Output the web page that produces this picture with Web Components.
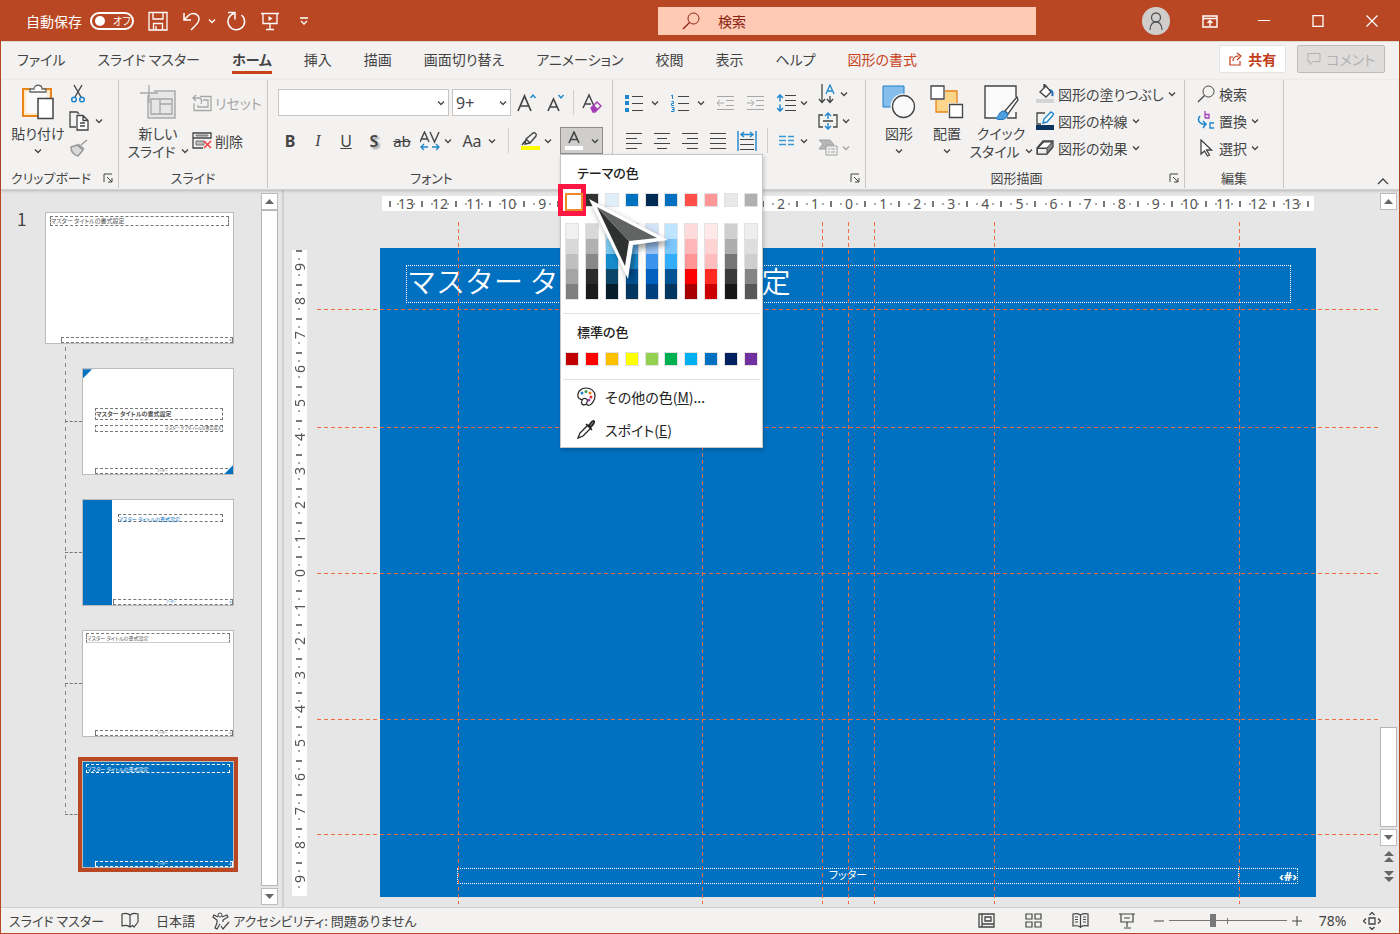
<!DOCTYPE html>
<html lang="ja">
<head>
<meta charset="utf-8">
<title>PowerPoint - スライド マスター</title>
<style>
html{height:100%}
body{margin:0;min-height:100%;display:flex;flex-direction:column;font:14px/18px "Noto Sans CJK JP","Noto Sans",sans-serif;font-feature-settings:"palt";color:#444;background:#e6e6e6}
</style>
</head>
<body>
<pp-window></pp-window>
<script>
const BASE = `*{box-sizing:border-box}
button,select,input{font:inherit;font-feature-settings:inherit;color:inherit;background:none;border:0;margin:0;padding:0}
button{display:inline-flex;align-items:center;justify-content:center;white-space:nowrap}`;

function define(tag, css, html) {
  const tpl = document.createElement('template');
  customElements.define(tag, class extends HTMLElement {
    constructor() {
      super();
      this.attachShadow({ mode: 'open' });
    }
    connectedCallback() {
      if (this.shadowRoot.childNodes.length) return;
      tpl.innerHTML = `<style>${BASE}${css}</style>${typeof html === 'function' ? html(this) : html}`;
      this.shadowRoot.append(tpl.content.cloneNode(true));
    }
  });
}

/* name: [width, height, markup] */
const lines = (rows, c = '#444') => rows.map(([x, y, w]) => `<path stroke="${c}" d="M${x} ${y}h${w}"/>`).join('');
const ICONS = {
  chev: [8, 6, '<path d="M1 1.5l3 3 3-3" stroke-width="1.3"/>'],
  up: [12, 8, '<path d="M1 7l5-5 5 5" stroke-width="1.3"/>'],
  save: [20, 20, '<path d="M1 1.500h18v17.500H1zM5 1.500v6.500h10V1.500M5.500 19v-6.500h9V19M8 15v4" stroke-width="1.300"/>'],
  undo: [20, 20, '<path d="M2 2v7h7M2 9l5-5c4-3 10-1 10 4 0 3-2 5-8 11" stroke-width="1.5"/>'],
  redo: [20, 20, '<path d="M2 1.500h7v7M8 2.500A8.300 8.300 0 1 0 15.500 4" stroke-width="1.500"/>'],
  show: [18, 19, '<path d="M0 1.500h18M2 1.500v10h14v-10M9 11.500V17M5 17.500h8" stroke-width="1.300"/><path d="M7.500 4v5l4-2.500z" fill="currentColor" stroke="none"/>'],
  custom: [10, 8, '<path d="M1 1h8M2 4l3 3 3-3" stroke-width="1.300"/>'],
  lens: [18, 18, '<circle cx="11.500" cy="6.500" r="5.500"/><path d="M7.500 10.500L1 17" stroke-width="1.300"/>'],
  user: [28, 28, '<circle cx="14" cy="14" r="14" fill="#d0cecd" stroke="none"/><circle cx="14" cy="10.500" r="4.500" stroke="#555" stroke-width="1.300"/><path d="M8 23c0-11 12-11 12 0" stroke="#555" stroke-width="1.300"/>'],
  ropt: [16, 13, '<path d="M1 1h14v11H1zM1 3.500h14M8 11V6M5.500 8L8 5.500 10.500 8" stroke-width="1.400"/>'],
  min: [12, 12, '<path d="M0 5.500h12"/>'],
  max: [12, 12, '<path d="M1 .5h10v11H1z" stroke-width="1.300"/>'],
  close: [12, 12, '<path d="M.5.5l11 11M11.500.5l-11 11" stroke-width="1.200"/>'],
  share: [14, 14, '<path d="M4 5H1v8h10V9M4 9c0-4 3-5 6-5M8 1l4 3-4 4" stroke-width="1.200"/>'],
  comment: [14, 14, '<path d="M1 1.500h12v8H6l-3 3v-3H1z"/>'],
  paste: [34, 36, '<path d="M10 5H2v27h28V5h-8" stroke="#e8841a" stroke-width="2" fill="#fbe9c8"/><path d="M5 8h21v21H5z" fill="#fafafa" stroke="none"/><path d="M9 8V5h4c0-5 8-5 8 0h4v3z" fill="#fff" stroke="#666" stroke-width="1.300"/><path d="M17 14.500h15v20H17z" fill="#fff" stroke="#444" stroke-width="1.500"/>'],
  cut: [18, 20, '<path d="M5 1l7 12M13 1L6 13" stroke-width="1.400"/><circle cx="5" cy="15.500" r="2.300" stroke="#1f86cc" stroke-width="1.500"/><circle cx="13" cy="15.500" r="2.300" stroke="#1f86cc" stroke-width="1.500"/>'],
  copy: [20, 20, '<path d="M7 16H1V1h7l2 2" stroke-width="1.300"/><path d="M8 4.500h6l5 5V19H8zM14 4.500v5h5M11 12h5M11 15h5" fill="#fff" stroke-width="1.300"/>'],
  brush: [20, 18, '<path d="M18 1l-6 5M9 5l6 5M8 6l-6 2c0 5 3 8 7 9l5-6z" stroke="#999" stroke-width="1.500" fill="#d8d8d8"/>'],
  newslide: [36, 34, '<path d="M8 10v23h27V6H14" fill="#e6e6e6" stroke="#aaa" stroke-width="1.500"/><path d="M11 14h21v15H11zM20 14v15M20 19h12M9 0v18M0 8h18" stroke="#a6a6a6" stroke-width="1.300"/>'],
  reset: [20, 18, '<path d="M8 2.500h11v14H2v-7M11 6h5v7H6v-2" stroke="#a6a6a6" stroke-width="1.300"/><path d="M4 1L1 4l3 3M1 4h6c3 0 3 4 2 6" stroke="#a6a6a6" stroke-width="1.300"/>'],
  del: [20, 18, '<path d="M1 1h18v5H1zM1 6v10h10" stroke-width="1.300"/><path d="M4 3h12v1H4zM4 9h8v4H4z" fill="#bbb" stroke="#777"/><path d="M12 9l7 7M19 9l-7 7" stroke="#f04040" stroke-width="1.500"/>'],
  grow: [20, 20, '<path d="M1 18L7.500 3 14 18M3.500 13h8" stroke-width="1.700"/><path d="M13.500 5L16 2l2.500 3" stroke="#1f86cc" stroke-width="1.400"/>'],
  shrink: [20, 20, '<path d="M3 18L8.500 6 14 18M5 14h7" stroke-width="1.600"/><path d="M13.500 2L16 5l2.500-3" stroke="#1f86cc" stroke-width="1.400"/>'],
  clear: [20, 20, '<path d="M1 15L7 2l5 11M3 11h6" stroke-width="1.500"/><path d="M9 15l6-6 4 4-6 6h-2z" stroke="#a63fb5" stroke-width="1.500" fill="#f3f2f1"/><path d="M9 15l3-3 4 4-3 3h-2z" fill="#a63fb5" stroke="none"/>'],
  av: [20, 20, '<path d="M0 11L4.500 1 9 11M2 8h5M10 1l4.500 10L19 1" stroke-width="1.400"/><path d="M1 16h7M4 13l-3 3 3 3M12 16h7M16 13l3 3-3 3" stroke="#1f86cc" stroke-width="1.300"/>'],
  mark: [20, 20, '<path d="M6 8l7-6c2-1 4 1 3 3l-6 7-5 1zM6 8l4 4M2 14l3-4" stroke-width="1.400"/><path d="M1 15h19v4H1z" fill="#ff0" stroke="none"/>'],
  fontcolor: [18, 20, '<path d="M4 12L9 1l5 11M6 8.500h6" stroke-width="1.600"/><path d="M0 15h18v4H0z" fill="#fff" stroke="none"/>'],
  bullets: [18, 18, lines([[7, 2.5, 11], [7, 9.5, 11], [7, 16.5, 11]]) + '<path d="M0 1h4v4H0zM0 7h4v4H0zM0 14h4v4H0z" fill="#1f86cc" stroke="none"/>'],
  numbers: [18, 18, lines([[7, 2.5, 11], [7, 9.5, 11], [7, 16.5, 11]]) + '<path d="M0 2l1.500-1v4M.5 7.500h2v2h-2v2h2.500M.5 13.500h2.500v4H0M1 15.500h2" stroke="#1f86cc"/>'],
  outdent: [18, 16, lines([[0, 1.5, 17], [9, 5.5, 8], [9, 10.5, 8], [0, 14.5, 17]], '#a8a8a8') + '<path d="M0 8h7M3 5L0 8l3 3" stroke="#a8a8a8"/>'],
  indent: [18, 16, lines([[0, 1.5, 17], [9, 5.5, 8], [9, 10.5, 8], [0, 14.5, 17]], '#a8a8a8') + '<path d="M0 8h7M4 5l3 3-3 3" stroke="#a8a8a8"/>'],
  spacing: [19, 18, lines([[8, 1.5, 11], [8, 6.5, 11], [8, 11.5, 11], [8, 16.5, 11]]) + '<path d="M3 1v6.500M0 4l3-3 3 3M3 10.500V17M0 14l3 3 3-3" stroke="#1f86cc" stroke-width="1.500"/>'],
  left: [18, 18, lines([[1, 1.5, 16], [1, 6.5, 11], [1, 11.5, 16], [1, 16.5, 11]])],
  center: [18, 18, lines([[1, 1.5, 16], [4, 6.5, 10], [1, 11.5, 16], [4, 16.5, 10]])],
  right: [18, 18, lines([[1, 1.5, 16], [6, 6.5, 11], [1, 11.5, 16], [6, 16.5, 11]])],
  just: [18, 18, lines([[1, 1.5, 16], [1, 6.5, 16], [1, 11.5, 16], [1, 16.5, 16]])],
  dist: [20, 20, lines([[3, 8.5, 14], [3, 13.5, 14], [3, 18.5, 14]]) + '<path d="M1 0v20M19 0v20M4 3.500h12M7 1L4 3.500 7 6M13 1l3 2.500L13 6" stroke="#1f86cc" stroke-width="1.400"/>'],
  cols: [16, 12, '<path d="M0 1.500h7M9 1.500h6M0 5.500h7M9 5.500h6M0 9.500h7M9 9.500h6" stroke="#3b97d8" stroke-width="1.400"/>'],
  textdir: [18, 20, '<path d="M4 0v18M1 15l3 3.500L7 15M12 12v6.500M9 15l3 3.500 3-3.500" stroke-width="1.300"/><path d="M8 10l4-9 4 9M10 7h4" stroke="#1f86cc" stroke-width="1.300"/>'],
  valign: [20, 18, '<path d="M5 3H1v12h4M15 3h4v12h-4M5 9h10" stroke-width="1.300"/><path d="M10 7V1M7 4l3-3 3 3M10 11v6M7 14l3 3 3-3" stroke="#1f86cc" stroke-width="1.400"/>'],
  smart: [20, 18, '<path d="M1 1h11l4 5H8v4H1l4-5z" fill="#b8b8b8" stroke="#a0a0a0"/><path d="M8 7h11v9H8zM10 10h2M13 10h4M10 13h2M13 13h4" fill="#f3f2f1" stroke="#a0a0a0"/>'],
  launch: [10, 10, '<path d="M1 9V1h8M4 4l5 5M9 5v4H5"/>'],
  shapes: [34, 34, '<path d="M1 1h21v21H1z" fill="#83beec" stroke="#1f7fc8"/><circle cx="21.500" cy="21.500" r="12" fill="#f3f2f1" stroke="#f3f2f1" stroke-width="2"/><circle cx="21.500" cy="21.500" r="11" fill="#fafafa" stroke-width="1.300"/>'],
  arrange: [34, 34, '<path d="M6 6h21v21H6z" fill="#fbd58a" stroke="#e8841a" stroke-width="1.300"/><path d="M0 0h15v15H0zM18 18h15v15H18z" fill="#f3f2f1" stroke="none"/><path d="M1 1h13v13H1zM19.500 19.500h13v13h-13z" fill="#fff" stroke-width="1.300"/>'],
  style: [36, 36, '<path d="M12 34H2V2h31v11M33 28v6h-9" fill="#fbfbfb" stroke-width="1.400"/><path d="M34 13L22 27l3 3 10-14z" fill="#fff" stroke-width="1.300"/><path d="M21 27c-6 0-4 6-9 7 5 3 12 2 13-4z" fill="#4f9fe0" stroke="#1f6fb8"/>'],
  fill: [18, 20, '<path d="M4 8l6-6 5 6-5 5zM8 4V0l3 3" stroke-width="1.400" fill="#fff"/><path d="M14 6c3 1 3 4 2 6" stroke="#1f6fb8" stroke-width="2"/><path d="M0 15h18v4H0z" fill="#d4d4d4" stroke="none"/>'],
  outline: [18, 20, '<path d="M9 2H1v11h4" stroke-width="1.300"/><path d="M7 12l1-4 7-7 3 2-7 8z" fill="#fff" stroke="#1f86cc" stroke-width="1.400"/><path d="M0 14h18v5H0z" fill="#0a3560" stroke="none"/>'],
  effect: [18, 18, '<path d="M1 9l6-7h10v6l-6 7H1z" fill="#888" stroke="#444" stroke-width="1.300"/><path d="M2 9l6-6h8l-5 6z" fill="#fff" stroke="#444"/><path d="M1.500 9.500H11V15H1.500z" fill="#eee"/>'],
  replace: [18, 20, '<path d="M8 0v7M8 3.500h4v3.500H8" stroke="#a63fb5" stroke-width="1.300"/><path d="M17 12h-4v5h4" stroke="#1f86cc" stroke-width="1.300"/><path d="M3 5c-4 5 1 9 6 8M6 10l3 3-3 4" stroke="#1f86cc" stroke-width="1.500"/>'],
  select: [14, 18, '<path d="M2 1v14l3.500-3 3 5 2-1-3-5h5z" fill="#fff" stroke-width="1.300"/>'],
  palette: [20, 20, '<path d="M10 17c-2 2-6 0-4-3 1-2-3-1-4-4C1 4 6 1 10 1c5 0 9 3 9 8 0 4-3 8-5 9-3 1-4-1-3-3 2-3-3-5-5-2" stroke-width="1.200"/><g stroke="none"><circle cx="6" cy="6" r="1.500" fill="#1f86cc"/><circle cx="10" cy="4.500" r="1.500" fill="#3a9a4a"/><circle cx="14" cy="6" r="1.500" fill="#e8841a"/><circle cx="15" cy="10" r="1.500" fill="#e03030"/><circle cx="13" cy="13" r="1.500" fill="#a63fb5"/></g>'],
  dropper: [20, 20, '<path d="M2 18l2-5 8-8 3 3-8 8z" stroke-width="1.300"/><path d="M10 4l6 6M13 6c1-3 4-6 5-5s-1 5-4 6z" fill="#777" stroke-width="1.500"/>'],
  book: [18, 18, '<path d="M9 3v12M9 3C7 1 4 1 1 2v12c3-1 6-1 8 1l2-1M9 3c2-2 5-2 8-1v8M11 13l2 2 4-5" stroke-width="1.200"/>'],
  access: [18, 18, '<circle cx="8" cy="3" r="2"/><path d="M6 5L2 3 1 5l4 3v3l-2 5 2 1 3-5M10 5l5-2 1 2-5 3v2M9 14l2 3 6-7" stroke-width="1.200"/>'],
  normal: [17, 15, '<path d="M1 1h15v13H1zM4 1v13M4 11h12M7 4h6v4H7z" stroke-width="1.300"/>'],
  sorter: [17, 15, '<path d="M1 1h6v5H1zM10 1h6v5h-6zM1 9h6v5H1zM10 9h6v5h-6z" stroke-width="1.200"/>'],
  reading: [17, 15, '<path d="M8.500 2v13M8.500 2C6 .5 3 .5 1 1v12c3-.5 5-.5 7.500 1C11 12.500 14 12.500 16 13V1c-2-.5-5-.5-7.500 1M3 4h3M3 6.500h3M3 9h3M11 4h3M11 6.500h3M11 9h3" stroke-width="1.200"/>'],
  present: [16, 16, '<path d="M0 1h16M2 1v8h12V1M5 5h6M8 9v5M5 15h7" stroke-width="1.200"/>'],
  minus: [10, 10, '<path d="M0 5h10"/>'],
  plus: [10, 10, '<path d="M0 5h10M5 0v10"/>'],
  fit: [18, 18, '<path d="M6 6h6v6H6zM6.500 3L9 .5 11.500 3M6.500 15L9 17.500l2.500-2.500M3 6.500L.5 9 3 11.500M15 6.500L17.500 9 15 11.500" stroke-width="1.300"/>'],
  triup: [9, 5, '<path d="M0 5L4.500 0 9 5z" fill="#666" stroke="none"/>'],
  tridown: [9, 5, '<path d="M0 0l4.500 5L9 0z" fill="#666" stroke="none"/>'],
  dblup: [10, 11, '<path d="M0 5l5-5 5 5zM0 11l5-5 5 5z" fill="#666" stroke="none"/>'],
  dbldown: [10, 11, '<path d="M0 0l5 5 5-5zM0 6l5 5 5-5z" fill="#666" stroke="none"/>']
};
define('pp-icon', ':host{display:inline-flex;flex:none}svg{display:block}', el => {
  const [w, h, m] = ICONS[el.getAttribute('name')];
  return `<svg width="${w}" height="${h}" viewBox="0 0 ${w} ${h}" fill="none" stroke="currentColor" aria-hidden="true">${m}</svg>`;
});
const icon = n => `<pp-icon name="${n}"></pp-icon>`;

define('pp-titlebar', `
:host{display:grid;grid-template-columns:47% 27% 1fr;height:40px;background:#b94723;color:#fff;align-items:center}
.left{display:flex;align-items:center;padding-left:25px}
.auto{display:flex;align-items:center;gap:8px}
.toggle{display:flex;align-items:center;gap:8px;width:44px;height:18px;border:2px solid #fff;border-radius:9px;padding:0 3px;font-size:10px;line-height:14px;white-space:nowrap}
.toggle input{appearance:none;width:10px;height:10px;border-radius:50%;background:#fff;flex:none}
.left button{height:24px}
.a{width:20px;margin-left:14px}.b{width:36px;margin-left:14px;gap:6px;justify-content:flex-start}.c{width:20px;margin-left:8px}
.search{display:flex;align-items:center;gap:18px;height:28px;background:#fecab4;color:#8a1f11;padding-left:24px;min-width:0}
.search input{flex:1;min-width:0;outline:0}
.search input::placeholder{color:#8a1f11;opacity:1}
.right{display:flex;justify-content:flex-end}
.right button{width:54px;height:40px}`, `
<div class="left"><label class="auto">自動保存<span class="toggle"><input type="checkbox" aria-label="自動保存">オフ</span></label>
<button class="a" aria-label="上書き保存">${icon('save')}</button>
<button class="b" aria-label="元に戻す">${icon('undo')}${icon('chev')}</button>
<button class="c" aria-label="やり直し">${icon('redo')}</button>
<button class="a" aria-label="最初から開始">${icon('show')}</button>
<button class="a" aria-label="クイック アクセス">${icon('custom')}</button></div>
<label class="search">${icon('lens')}<input type="search" placeholder="検索" aria-label="検索"></label>
<div class="right"><button aria-label="アカウント">${icon('user')}</button><button aria-label="リボンの表示オプション">${icon('ropt')}</button><button aria-label="最小化">${icon('min')}</button><button aria-label="最大化">${icon('max')}</button><button aria-label="閉じる">${icon('close')}</button></div>`);

define('pp-tabs', `
:host{display:flex;height:39px;align-items:center;justify-content:space-between;background:#f3f2f1;border-top:1px solid #e4d8d3;padding:0 14px 4px 16px}
nav{display:flex;gap:32px;white-space:nowrap}
a{color:inherit;text-decoration:none;line-height:24px}
a.on{font-weight:700;box-shadow:0 3px #c8431a}
a.ctx{color:#c8431a}
.acts{display:flex;gap:11px}
.acts button{height:28px;gap:5px;padding:0 9px;border-radius:2px}
.share{background:#fff;color:#c03d18;font-weight:700;border:1px solid #e6e4e2}
.com{background:#dedddc;color:#b4b2b0;border:1px solid #bdbbb9}`, `
<nav><a href="#">ファイル</a><a href="#">スライド マスター</a><a href="#" class="on">ホーム</a><a href="#">挿入</a><a href="#">描画</a><a href="#">画面切り替え</a><a href="#">アニメーション</a><a href="#">校閲</a><a href="#">表示</a><a href="#">ヘルプ</a><a href="#" class="ctx">図形の書式</a></nav>
<div class="acts"><button class="share">${icon('share')}共有</button><button class="com" disabled>${icon('comment')}コメント</button></div>`);

/* One ribbon section: tools above, caption and dialog launcher below */
define('pp-group', `
:host{display:grid;grid-template-rows:88px 20px;height:108px;flex:none;border-right:1px solid #c8c6c4;width:var(--w)}
.body{display:flex;padding-left:var(--p,10px)}
.foot{display:flex;align-items:center;text-align:center;font-size:13px;white-space:nowrap}
.foot button{height:14px;width:14px;margin-right:3px}
.foot span{flex:1}`, el => `
<div class="body"><slot></slot></div><div class="foot"><span>${el.getAttribute('label')}</span>${el.hasAttribute('launch') ? `<button aria-label="${el.getAttribute('label')} の設定">${icon('launch')}</button>` : ''}</div>`);

define('pp-big', `
:host{display:block;flex:none;width:48px}
:host([size=m]){width:54px}
:host([size=l]){width:60px}
button{width:100%;display:flex;flex-direction:column}
.i{height:44px;display:flex;align-items:center}
.l{height:18px;display:flex;align-items:center;gap:5px}`, el => {
  const l2 = el.getAttribute('line2') || '';
  return `<button><span class="i">${icon(el.getAttribute('icon'))}</span><span class="l">${el.getAttribute('label')}</span><span class="l">${l2}${icon('chev')}</span></button>`;
});

define('pp-tool', `
:host{display:inline-flex;flex:none;position:relative}
:host([off]){color:#a6a6a6}
button{height:27px;gap:var(--g,4px)}
.i{display:flex;justify-content:center;min-width:18px}
:host([open]) button{background:#cfcecc;border:1px solid #8f8d8b;width:43px}`, el => {
  const n = el.getAttribute('icon'), t = el.getAttribute('label');
  return `<button${t ? '' : ` aria-label="${el.getAttribute('tip') || n}"`}${el.hasAttribute('off') ? ' disabled' : ''}>${n ? `<span class="i">${icon(n)}</span>` : ''}${t ? `<span>${t}</span>` : ''}<slot></slot>${el.hasAttribute('menu') ? icon('chev') : ''}</button><slot name="popup"></slot>`;
});

define('pp-combo', `
:host{display:grid;width:171px;height:27px;background:#fff;border:1px solid #c8c6c4;align-items:center}
:host([small]){width:59px;margin:0 6px 0 3px}
select{grid-area:1/1;appearance:none;width:100%;height:100%;padding-left:3px;font:16px/24px "Noto Sans",sans-serif;outline:0}
pp-icon{grid-area:1/1;justify-self:end;margin-right:3px;pointer-events:none}`, el => `
<select aria-label="${el.getAttribute('label')}"><option>${el.getAttribute('value')}</option></select>${icon('chev')}`);

const THEME = ['#fff', '#333', '#dfeffa', '#0070c0', '#002b54', '#0070c0', '#ff4f4b', '#ff9696', '#e8e8e8', '#b0b0b0'];
const TINTS = [
  ['#f0f0f0', '#d8d8d8', '#bfbfbf', '#a5a5a5', '#7f7f7f'], ['#d8d8d8', '#b0b0b0', '#888', '#2a2a2a', '#1a1a1a'],
  ['#c4e6f8', '#7cc8ee', '#168bcb', '#0a4668', '#051d2b'], ['#b5e0ff', '#6cc0fa', '#1a8fd8', '#005293', '#003660'],
  ['#d3e3f8', '#9cc4f6', '#3a94ed', '#0060c0', '#004080'], ['#bde5ff', '#7cc8ff', '#33aeff', '#005493', '#00365f'],
  ['#ffdada', '#ffb6b6', '#ff9494', '#f00', '#a80000'], ['#ffe8e8', '#ffd3d3', '#ffbcbc', '#ff2a22', '#c00'],
  ['#d0d0d0', '#adadad', '#757575', '#3a3a3a', '#171717'], ['#eee', '#dedede', '#cecece', '#858585', '#585858']];
const STANDARD = ['#c00000', '#f00', '#ffc000', '#ff0', '#92d050', '#00b050', '#00b0f0', '#0070c0', '#002060', '#7030a0'];
const sw = c => `<button class="sw" style="background:${c}" aria-label="${c}"></button>`;
define('pp-colormenu', `
:host{position:absolute;top:27px;left:0;z-index:5;width:203px;background:#fff;border:1px solid #c6c6c6;box-shadow:1px 2px 4px #0003;color:#222;padding-bottom:1px}
h3{margin:0;padding-left:16px;font-size:13px;font-weight:500;line-height:36px}
.row{display:flex;justify-content:space-between;padding:2px 4px 0}
.sw{width:14px;height:14px;border:1px solid #e2e2e2}
.tints{padding-top:12px}
.col{width:14px;border:1px solid #e2e2e2;display:grid}
.col button{height:15px}
hr{margin:13px 2px 0;border:0;border-top:1px solid #e1e1e1}
.item{display:flex;justify-content:flex-start;width:100%;height:33px;padding-left:15px;gap:9px}
.first{position:relative}
.pick{position:absolute;left:-7px;top:-9px;width:28px;height:32px;border:5px solid #ff1744;background:#fff;pointer-events:none}
.pick::after{content:"";position:absolute;left:2px;top:4px;width:14px;height:14px;border:2px solid #f08a2c;background:#fff}
.arrow{position:absolute;left:24px;top:38px;pointer-events:none;filter:drop-shadow(3px 4px 3px #0006)}`, `
<h3>テーマの色</h3>
<div class="row"><div class="first">${sw(THEME[0])}<span class="pick"></span></div>${THEME.slice(1).map(sw).join('')}</div>
<div class="row tints">${TINTS.map(c => `<div class="col">${c.map(x => `<button style="background:${x}" aria-label="${x}"></button>`).join('')}</div>`).join('')}</div>
<hr><h3>標準の色</h3>
<div class="row">${STANDARD.map(sw).join('')}</div><hr>
<button class="item">${icon('palette')}<span>その他の色(<u>M</u>)...</span></button>
<button class="item">${icon('dropper')}<span>スポイト(<u>E</u>)</span></button>
<svg class="arrow" width="86" height="90" viewBox="0 0 86 90"><path d="M4 6l79 41-35 5-5 34z" fill="#fff"/><path d="M12 14l32 34-4 25z" fill="#2e3130"/><path d="M12 14l60 31-28 3z" fill="#626463"/></svg>`);

define('pp-ribbon', `
:host{display:flex;position:relative;z-index:3;height:110px;background:#f3f2f1;border-bottom:1px solid #d2d0ce;box-shadow:0 1px 3px #0003}
.col{display:flex;flex-direction:column;align-items:flex-start}
.col.two{gap:11px;padding-top:9px}
.col.mid{padding-left:10px}
.row{display:flex;align-items:center;height:27px}
.size{gap:8px}
.fmt{gap:8px;padding-left:2px}
.fmt b,.fmt i,.fmt u,.fmt s{display:inline-block;width:20px;text-align:center;font:16px/24px "Noto Sans",sans-serif}
.fmt b{font-weight:700}.fmt i{font-style:italic;font-family:"Liberation Serif",serif}.fmt s{font-size:15px}
.fmt .sh{font-weight:600;text-shadow:2px 2px 2px #999}
.fmt .aa{font:16px/24px "Noto Sans",sans-serif;width:24px}
.vr{width:1px;height:25px;background:#d0cecc}
.fmt .vr{margin:0 3px 0 4px}
.lists{gap:12px}.aligns{gap:10px}
.end{flex:1;display:flex;align-items:flex-end;justify-content:flex-end;padding:0 10px 4px 0}
.cl{padding-left:4px}.ind{padding-left:5px}`, `
<pp-group label="クリップボード" launch style="--w:118px;--p:10px"><pp-big size="m" icon="paste" label="貼り付け"></pp-big>
<div class="col cl"><pp-tool icon="cut"></pp-tool><pp-tool icon="copy" menu style="--g:6px"></pp-tool><pp-tool icon="brush"></pp-tool></div></pp-group>
<pp-group label="スライド" style="--w:149px;--p:9px"><pp-big size="l" icon="newslide" label="新しい" line2="スライド"></pp-big>
<div class="col two cl"><pp-tool icon="reset" label="リセット" off style="--g:3px"></pp-tool><pp-tool icon="del" label="削除" style="--g:3px"></pp-tool></div></pp-group>
<pp-group label="フォント" launch style="--w:345px;--p:10px"><div class="col two">
<div class="row"><pp-combo label="フォント" value=""></pp-combo><pp-combo small label="フォント サイズ" value="9+"></pp-combo>
<div class="row size"><pp-tool icon="grow"></pp-tool><pp-tool icon="shrink"></pp-tool><span class="vr"></span><pp-tool icon="clear"></pp-tool></div></div>
<div class="row fmt"><pp-tool tip="太字"><b>B</b></pp-tool><pp-tool tip="斜体"><i>I</i></pp-tool><pp-tool tip="下線"><u>U</u></pp-tool><pp-tool tip="影"><b class="sh">S</b></pp-tool><pp-tool tip="取り消し線"><s>ab</s></pp-tool><pp-tool icon="av" menu></pp-tool><pp-tool tip="文字種の変換" menu><span class="aa">Aa</span></pp-tool><span class="vr"></span><pp-tool icon="mark" menu></pp-tool>
<pp-tool icon="fontcolor" menu open style="--g:8px"><pp-colormenu slot="popup"></pp-colormenu></pp-tool></div></div></pp-group>
<pp-group label="" launch style="--w:253px;--p:12px"><div class="col two">
<div class="row lists"><pp-tool icon="bullets" menu style="--g:8px"></pp-tool><pp-tool icon="numbers" menu style="--g:8px"></pp-tool><pp-tool icon="outdent" off></pp-tool><pp-tool icon="indent" off></pp-tool><pp-tool icon="spacing" menu></pp-tool></div>
<div class="row aligns"><pp-tool icon="left"></pp-tool><pp-tool icon="center"></pp-tool><pp-tool icon="right"></pp-tool><pp-tool icon="just"></pp-tool><pp-tool icon="dist"></pp-tool><span class="vr"></span><pp-tool icon="cols" menu></pp-tool></div></div>
<div class="col mid"><pp-tool icon="textdir" menu></pp-tool><pp-tool icon="valign" menu></pp-tool><pp-tool icon="smart" menu off></pp-tool></div></pp-group>
<pp-group label="図形描画" launch style="--w:319px;--p:9px"><pp-big icon="shapes" label="図形"></pp-big><pp-big icon="arrange" label="配置"></pp-big><pp-big size="l" icon="style" label="クイック" line2="スタイル"></pp-big>
<div class="col ind"><pp-tool icon="fill" label="図形の塗りつぶし" menu></pp-tool><pp-tool icon="outline" label="図形の枠線" menu></pp-tool><pp-tool icon="effect" label="図形の効果" menu></pp-tool></div></pp-group>
<pp-group label="編集" style="--w:99px;--p:12px"><div class="col"><pp-tool icon="lens" label="検索"></pp-tool><pp-tool icon="replace" label="置換" menu></pp-tool><pp-tool icon="select" label="選択" menu></pp-tool></div></pp-group>
<div class="end"><button aria-label="リボンを折りたたむ">${icon('up')}</button></div>`);

define('pp-scroll', `
:host{display:flex;flex-direction:column;width:17px}
button{width:100%;height:17px;background:#fff;border:1px solid #bdbdbd;flex:none}
.bar{background:#fff;border:1px solid #b5b5b5;flex:1;margin-bottom:2px}
:host([page]) .bar{flex:0 0 100px;margin-top:auto}
.pg{background:none;border:0;height:20px}`, el => `
<button aria-label="上へ">${icon('triup')}</button><div class="bar"></div><button aria-label="下へ">${icon('tridown')}</button>
${el.hasAttribute('page') ? `<button class="pg" aria-label="前のスライド">${icon('dblup')}</button><button class="pg" aria-label="次のスライド">${icon('dbldown')}</button>` : ''}`);

/* Miniature slide; kind = master | title | side | lined | blue */
define('pp-thumb', `
:host{display:block;position:relative;background:#fff;border:1px solid #bbb;aspect-ratio:152/107;color:#555;font-size:5px;line-height:7px;overflow:hidden}
:host([kind=master]){aspect-ratio:190/133;font-size:6px}
:host([kind=blue]){background:#0070c0;color:#fff;outline:4px solid #b94723;overflow:visible}
.t,.s,.f{position:absolute;border:1px dashed #777;white-space:nowrap}
.t{left:2%;right:2%;top:2%;height:8%}
.f{left:8%;right:0;bottom:0;height:6px;display:flex;justify-content:space-between;font-size:3px;line-height:4px}
.f::before{content:""}
.s{display:none}
:host([kind=title]) .t{left:8%;right:7%;top:37%;height:11%;font-weight:700;font-size:6px;line-height:9px}
:host([kind=title]) .s{display:block;left:8%;right:7%;top:53%;height:7%;text-align:right;font-size:4px;line-height:5px}
:host([kind=title])::before,:host([kind=title])::after{content:"";position:absolute;width:9px;height:9px;background:#0070c0}
:host([kind=title])::before{left:0;top:0;clip-path:polygon(0 0,100% 0,0 100%)}
:host([kind=title])::after{right:0;bottom:0;clip-path:polygon(100% 0,100% 100%,0 100%)}
:host([kind=side]){background:linear-gradient(90deg,#0070c0 29px,#fff 29px);color:#0070c0}
:host([kind=side]) .t{left:23%;right:7%;top:13%}
:host([kind=side]) .f{left:20%}
:host([kind=lined]) .t{border-bottom:1px solid #ccc;height:9%}
:host([kind=blue]) .t,:host([kind=blue]) .f{border-color:#fff}`, el => `
<span class="t">マスター タイトルの書式設定</span>${el.getAttribute('kind') === 'title' ? '<span class="s">マスター サブタイトルの書式設定</span>' : ''}<span class="f"><span>フッター</span><span>‹#›</span></span>`);

define('pp-panel', `
:host{display:grid;grid-template-columns:1fr 17px 6px;width:283px;border-right:2px solid #cfcfcf;padding:3px 0 2px}
ol,ul{list-style:none;margin:0}
ol{padding:19px 27px 0 16px;font-size:17px}
.m{display:grid;grid-template-columns:28px 189px;margin-bottom:3px}
.m span{line-height:14px}
ul{padding:21px 0 0 48px;background:repeating-linear-gradient(180deg,#888 0 4px,transparent 4px 8px) 48px 0/1px 466px no-repeat}
.lay{display:grid;grid-template-columns:17px 152px;align-items:center;margin-bottom:24px}
.lay::before{content:"";border-top:1px dashed #777}`, `
<ol><li><div class="m"><span>1</span><pp-thumb kind="master"></pp-thumb></div>
<ul><li class="lay"><pp-thumb kind="title"></pp-thumb></li><li class="lay"><pp-thumb kind="side"></pp-thumb></li><li class="lay"><pp-thumb kind="lined"></pp-thumb></li><li class="lay"><pp-thumb kind="blue"></pp-thumb></li></ul></li></ol>
<pp-scroll></pp-scroll>`);

/* Ruler counting down to zero at its middle; max = outermost number */
define('pp-ruler', `
:host{display:flex;background:#fff;height:15px;padding:0 5px 0 7px;font:14px/15px "Noto Sans",sans-serif;color:#555}
:host([vertical]){writing-mode:vertical-rl;transform:rotate(180deg);height:auto;width:15px;padding:0}
span{flex:1 1 0;min-width:0;display:flex;align-items:center;justify-content:center;
background:linear-gradient(#777,#777) 100% 50%/2px 6px,linear-gradient(#aaa,#aaa) 25% 50%/2px 2px,linear-gradient(#aaa,#aaa) 75% 50%/2px 2px;background-repeat:no-repeat}
:host([vertical]) span{min-height:0;background:linear-gradient(#777,#777) 50% 100%/6px 2px,linear-gradient(#aaa,#aaa) 50% 25%/2px 2px,linear-gradient(#aaa,#aaa) 50% 75%/2px 2px;background-repeat:no-repeat}
:host(:not([vertical])) span:first-of-type{background-image:linear-gradient(#777,#777),linear-gradient(#aaa,#aaa),linear-gradient(#aaa,#aaa),linear-gradient(#777,#777);background-position:100% 50%,25% 50%,75% 50%,0 50%;background-size:2px 6px,2px 2px,2px 2px,2px 6px}`, el => {
  const m = +el.getAttribute('max');
  return Array.from({ length: 2 * m + 1 }, (_, i) => `<span>${Math.abs(i - m)}</span>`).join('');
});

define('pp-slide', `
:host{display:block;position:relative;background:#0070c0;color:#fff;aspect-ratio:936/649}
.box{position:absolute;border:1px dotted #fff;white-space:nowrap}
.title{left:26px;right:25px;top:17px;height:38px;font-size:29px;line-height:28px;font-weight:350;font-feature-settings:normal}
.foot{left:77px;right:77px;bottom:2%;height:16px;font-size:11px;line-height:11px;text-align:center}
.num{width:60px;right:18px;bottom:2%;height:16px;font:700 13px/14px "Noto Sans",sans-serif;text-align:right}
svg{position:absolute;left:-63px;top:-26px;width:calc(100% + 125px);height:calc(100% + 33px);pointer-events:none}
line{stroke:#f26b43;stroke-width:1;stroke-dasharray:4 3;shape-rendering:crispEdges}`, () => {
  const v = [141, 385, 505, 531, 558, 677, 922].map(x => `<line x1="${(x / 10.61).toFixed(2)}%" x2="${(x / 10.61).toFixed(2)}%" y1="0" y2="100%"/>`).join('');
  const h = [88, 205, 352, 498, 613].map(y => `<line y1="${(y / 6.82).toFixed(2)}%" y2="${(y / 6.82).toFixed(2)}%" x1="0" x2="100%"/>`).join('');
  return `<div class="box title">マスター タイトルの書式設定</div><div class="box foot">フッター</div><div class="box num">‹#›</div><svg aria-hidden="true">${v}${h}</svg>`;
});

define('pp-editor', `
:host{display:grid;flex:1;min-width:0;grid-template-columns:15px minmax(0,1fr) 17px;padding:3px 2px 10px 8px}
.side{display:flex;flex-direction:column;padding:57px 0 1px}
.side pp-ruler{flex:1}
.mid{padding:3px 64px 0 73px}
.mid pp-ruler{margin:0 2px 37px}
pp-scroll{margin-bottom:11px}`, `
<div class="side"><pp-ruler vertical max="9"></pp-ruler></div>
<div class="mid"><pp-ruler max="13"></pp-ruler><pp-slide></pp-slide></div>
<pp-scroll page></pp-scroll>`);

define('pp-status', `
:host{display:flex;height:26px;align-items:center;justify-content:space-between;background:#f3f2f1;border-top:1px solid #d0d0d0;padding:0 18px 0 8px;white-space:nowrap;font-size:13px}
div{display:flex;align-items:center}
.l{gap:17px}.r{gap:15px}
.views{gap:30px;margin-right:4px}
.acc{gap:3px}
.zoom{gap:5px}
.pct{font:14px/18px "Noto Sans",sans-serif;width:31px}
.track{display:grid;width:118px;height:16px;background:linear-gradient(#777,#777) 58px 50%/1px 6px no-repeat,linear-gradient(#777,#777) 0 50%/100% 1px no-repeat}
input{appearance:none;width:100%;height:16px;outline:0}
input::-webkit-slider-thumb{appearance:none;width:6px;height:13px;background:#777}`, `
<div class="l"><button>スライド マスター</button><button aria-label="スペル チェック">${icon('book')}</button><button>日本語</button><button class="acc">${icon('access')}アクセシビリティ: 問題ありません</button></div>
<div class="r"><div class="views"><button aria-label="標準">${icon('normal')}</button><button aria-label="スライド一覧">${icon('sorter')}</button><button aria-label="閲覧表示">${icon('reading')}</button><button aria-label="スライド ショー">${icon('present')}</button></div>
<div class="zoom"><button aria-label="縮小">${icon('minus')}</button><span class="track"><input type="range" min="0" max="100" value="37" aria-label="ズーム"></span><button aria-label="拡大">${icon('plus')}</button></div>
<button class="pct">78%</button><button aria-label="ウィンドウに合わせる">${icon('fit')}</button></div>`);

define('pp-window', `
:host{flex:1;display:flex;flex-direction:column;border:1px solid #b94723}
main{flex:1;display:flex}`, `
<pp-titlebar></pp-titlebar><pp-tabs></pp-tabs><pp-ribbon></pp-ribbon>
<main><pp-panel></pp-panel><pp-editor></pp-editor></main><pp-status></pp-status>`);
</script>
</body>
</html>
